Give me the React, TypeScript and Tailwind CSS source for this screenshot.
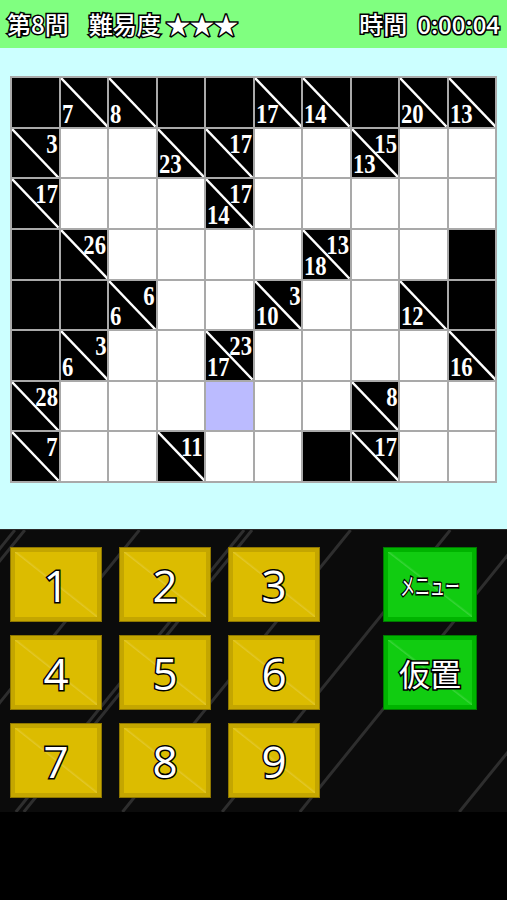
import React from 'react';

type Clue = { d?: number; r?: number };
type Cell = 'B' | 'W' | 'S' | Clue;

const B = 'B' as const;
const W = 'W' as const;
const S = 'S' as const;

const board: Cell[][] = [
  [B, { d: 7 }, { d: 8 }, B, B, { d: 17 }, { d: 14 }, B, { d: 20 }, { d: 13 }],
  [{ r: 3 }, W, W, { d: 23 }, { r: 17 }, W, W, { r: 15, d: 13 }, W, W],
  [{ r: 17 }, W, W, W, { r: 17, d: 14 }, W, W, W, W, W],
  [B, { r: 26 }, W, W, W, W, { r: 13, d: 18 }, W, W, B],
  [B, B, { r: 6, d: 6 }, W, W, { r: 3, d: 10 }, W, W, { d: 12 }, B],
  [B, { r: 3, d: 6 }, W, W, { r: 23, d: 17 }, W, W, W, W, { d: 16 }],
  [{ r: 28 }, W, W, W, S, W, W, { r: 8 }, W, W],
  [{ r: 7 }, W, W, { r: 11 }, W, W, B, { r: 17 }, W, W],
];

const outline = '[-webkit-text-stroke:3px_#000] [paint-order:stroke_fill]';

const BoardCell: React.FC<{ cell: Cell }> = ({ cell }) => {
  if (cell === 'W') return <div className="bg-white" />;
  if (cell === 'S') return <div className="bg-[#bbbbff]" />;
  if (cell === 'B') return <div className="bg-black" />;
  return (
    <div className="relative bg-black">
      <svg className="absolute inset-0 h-full w-full" viewBox="0 0 100 100" preserveAspectRatio="none">
        <line x1="0" y1="0" x2="100" y2="100" stroke="#fff" strokeWidth="2.4" vectorEffect="non-scaling-stroke" />
      </svg>
      {cell.r !== undefined && (
        <span className="absolute right-[1px] top-[2px] inline-block origin-right scale-x-[0.84] font-['Liberation_Serif',serif] text-[27px] font-bold leading-none text-white">
          {cell.r}
        </span>
      )}
      {cell.d !== undefined && (
        <span className="absolute bottom-[-1px] left-[1px] inline-block origin-left scale-x-[0.84] font-['Liberation_Serif',serif] text-[27px] font-bold leading-none text-white">
          {cell.d}
        </span>
      )}
    </div>
  );
};

const NumKey: React.FC<{ n: number }> = ({ n }) => (
  <div className="flex h-[75px] w-[92px] border border-[#8f7700] bg-[#c4a600] p-[4px]">
    <div className="flex flex-1 items-center justify-center bg-[#dcbc00] bg-[linear-gradient(to_top_right,transparent_49%,rgba(255,255,255,0.16)_50%,transparent_52%)]">
      <span className={`font-['Open_Sans',sans-serif] text-[44px] leading-none text-white ${outline}`}>{n}</span>
    </div>
  </div>
);

const SideKey: React.FC<{ children: React.ReactNode }> = ({ children }) => (
  <div className="flex h-[75px] w-[94px] shrink-0 border border-[#007a00] bg-[#00b400] p-[4px]">
    <div className="flex min-w-0 flex-1 items-center justify-center bg-[#11cc11] bg-[linear-gradient(to_top_right,transparent_49%,rgba(255,255,255,0.16)_50%,transparent_52%)]">
      {children}
    </div>
  </div>
);

const stripes = [-215, -205, -90, 15, 23, 122, 222, 300, 460];

export default function App() {
  return (
    <div className="flex h-[900px] w-[507px] flex-col bg-black">
      <header
        className={`flex h-[48px] items-center justify-between bg-[#80ff80] px-[7px] font-['Noto_Sans_CJK_JP',sans-serif] text-[24px] font-medium text-white ${outline}`}
      >
        <div className="flex items-center gap-[20px]">
          <span>第8問</span>
          <span>難易度 ★★★</span>
        </div>
        <div className="flex items-center gap-[10px]">
          <span>時間</span>
          <span>0:00:04</span>
        </div>
      </header>

      <section className="h-[481px] bg-[#ccffff] pl-[10px] pt-[28px]">
        <div className="grid h-[407px] w-[487px] grid-cols-10 grid-rows-8 gap-[2px] bg-[#a9a9a9] p-[2px]">
          {board.flat().map((c, i) => (
            <BoardCell key={i} cell={c} />
          ))}
        </div>
      </section>

      <section className="relative h-[283px] border-t border-[#2a2a2a] bg-[#0b0b0b]">
        <svg className="absolute inset-0 h-full w-full" viewBox="0 0 507 283">
          {stripes.map((x, i) => (
            <line key={i} x1={x} y1={283} x2={x + 229} y2={0} stroke="#2e2e2e" strokeWidth={3} />
          ))}
        </svg>
        <div className="relative flex gap-[63px] pl-[10px] pt-[17px]">
          <div className="grid grid-cols-3 gap-x-[17px] gap-y-[13px]">
            {[1, 2, 3, 4, 5, 6, 7, 8, 9].map((n) => (
              <NumKey key={n} n={n} />
            ))}
          </div>
          <div className="flex flex-col gap-[13px]">
            <SideKey>
              <span
                className={`mx-[-18px] inline-block scale-x-[0.62] whitespace-nowrap font-['Noto_Sans_CJK_JP',sans-serif] text-[24px] leading-none text-white ${outline}`}
              >
                メニュー
              </span>
            </SideKey>
            <SideKey>
              <span className={`whitespace-nowrap font-['Noto_Sans_CJK_JP',sans-serif] text-[31px] leading-none text-white ${outline}`}>
                仮置
              </span>
            </SideKey>
          </div>
        </div>
      </section>
    </div>
  );
}
